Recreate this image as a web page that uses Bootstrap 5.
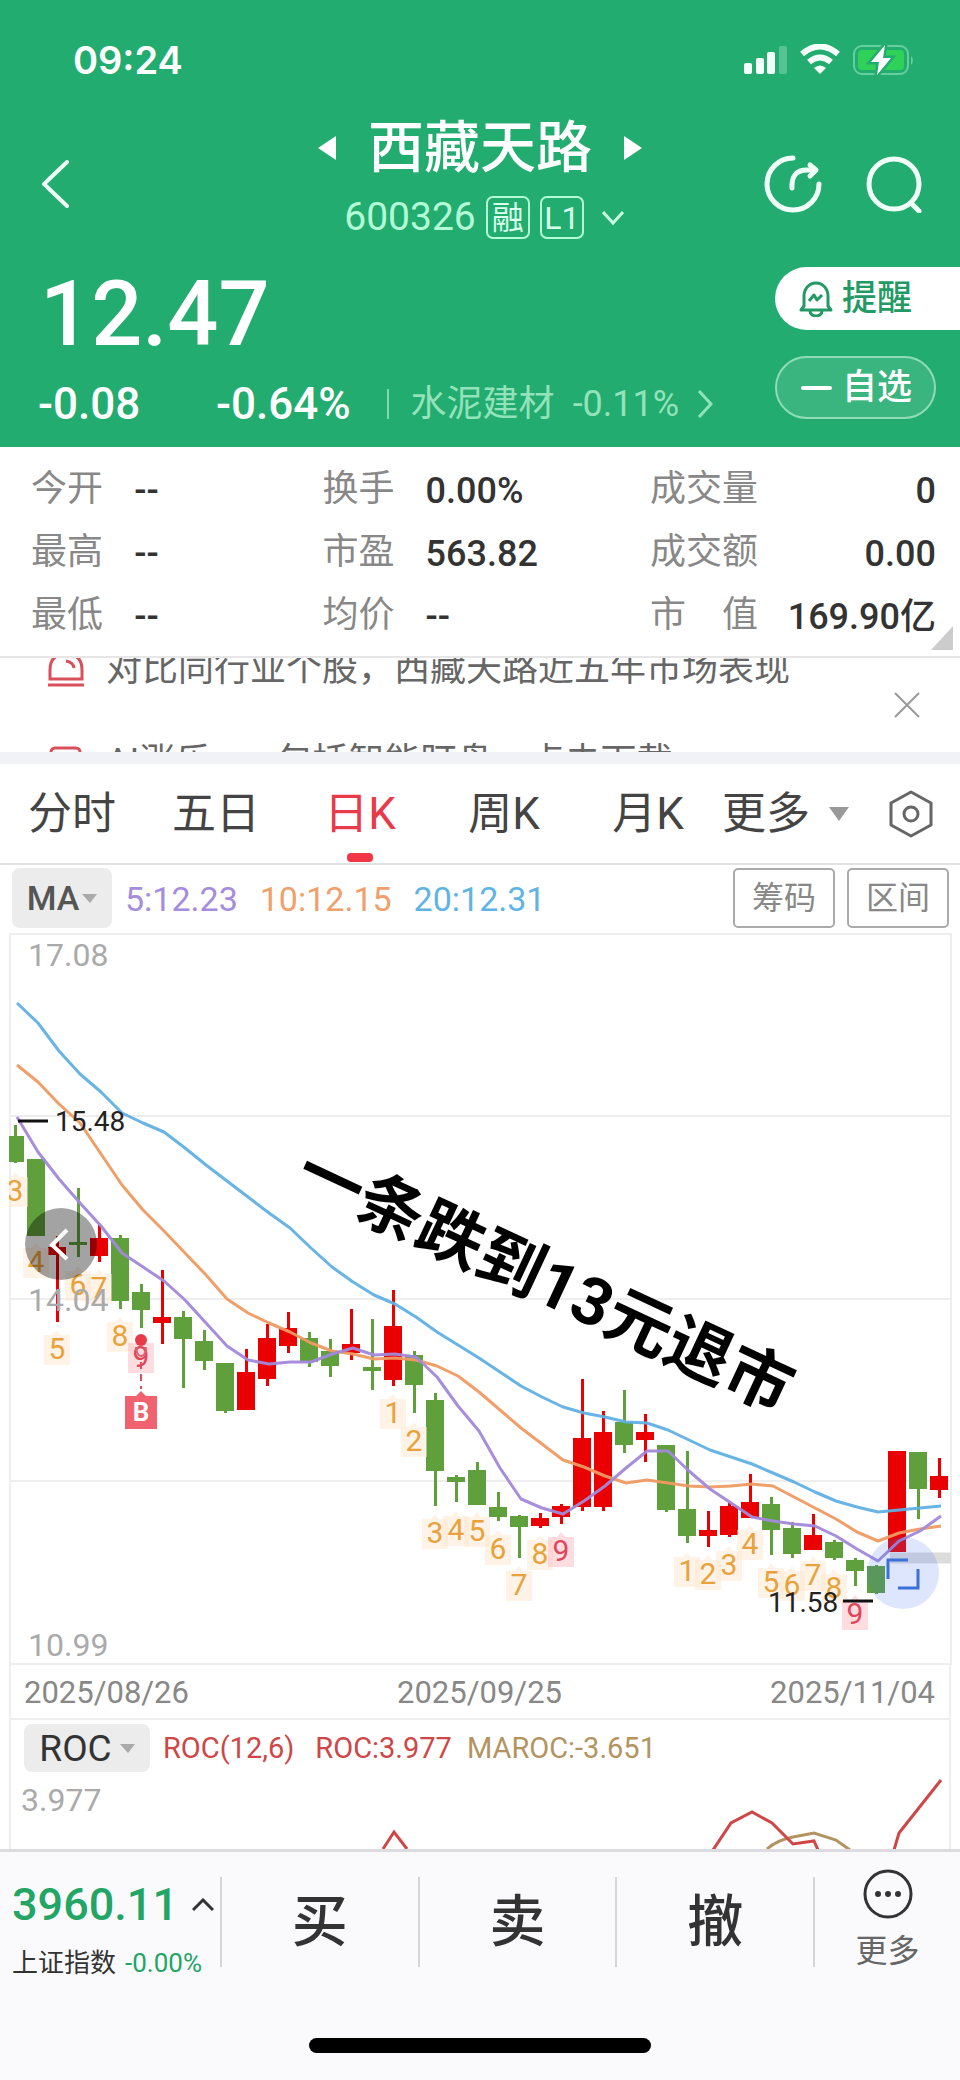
<!DOCTYPE html>
<html lang="zh-CN">
<head>
<meta charset="utf-8">
<meta name="viewport" content="width=device-width, initial-scale=1">
<title>西藏天路 600326</title>
<link href="https://cdn.jsdelivr.net/npm/bootstrap@5.3.0/dist/css/bootstrap.min.css" rel="stylesheet">
<style>
  body { font-family: Roboto, "Noto Sans CJK SC", sans-serif; color: #333; background: #fff; line-height: 1; }
  button { font-family: inherit; border: 0; background: none; padding: 0; color: inherit; line-height: inherit; }
  a { color: inherit; text-decoration: none; }
  svg { display: block; flex: none; }
  .quote-head { background: #23ac6f; color: #fff; padding-bottom: 22px; }
  .status-bar { height: 120px; padding: 0 44px 0 73px; }
  .clock { font: 600 38px/40px Inter, sans-serif; }
  .nav-row { height: 119px; padding: 0 36px; }
  .side-slot { width: 160px; }
  .stock-name { font-size: 56px; line-height: 56px; font-weight: 500; margin: 0; }
  .stock-code { font-size: 39px; color: #b4fbd8; }
  .flag { width: 44px; height: 43px; border: 2px solid #b4fbd8; border-radius: 7px; font-size: 32px; color: #d8ffec; }
  .quote-main { min-height: 159px; margin-bottom: -1px; }
  .price { font-size: 90px; line-height: 80px; font-weight: 500; padding: 8px 0 0 2px; }
  .change { font-size: 44px; line-height: 44px; font-weight: 500; }
  .change-first { width: 178px; }
  .sector { font-size: 36px; color: #93e2ba; }
  .pill { width: 161px; height: 63px; font-size: 35px; font-weight: 500; border-radius: 32px; gap: 9px; }
  .pill-alert { width: 185px; background: #fff; color: #239a66; border-radius: 32px 0 0 32px; padding-left: 24px; }
  .pill-fav { background: #3bb57f; border: 2px solid #8fdcb6; padding-left: 24px; }
  .stats { width: 100%; table-layout: fixed; margin: 0; }
  .stats-wrap { padding: 10px 24px 10px 31px; border-bottom: 2px solid #e6e6e6; position: relative; }
  .stats th { font-size: 36px; font-weight: 400; color: #888; height: 63px; padding: 0; white-space: nowrap; }
  .stats td { font-size: 36px; font-weight: 500; color: #333; padding: 5px 0 0; white-space: nowrap; }
  .corner { position: absolute; right: 7px; bottom: 6px; }
  .ads { height: 94px; overflow: hidden; font-size: 36px; line-height: 48px; color: #666; padding: 0 39px 0 48px; }
  .ads-list { margin-top: -13px; }
  .ads-item { height: 48px; margin-bottom: 45px; gap: 22px; }
  .band { height: 12px; background: #f1f2f7; }
  .tabs { height: 101px; border-bottom: 2px solid #e2e2e2; font-size: 44px; color: #444; }
  .tab { width: 15%; position: relative; }
  .tab.on { color: #e83a49; }
  .tab.on::after { content: ""; position: absolute; left: 50%; margin-left: -13px; bottom: 1px; width: 26px; height: 9px; border-radius: 4px; background: #f23645; }
  .ma-row { height: 68px; padding: 3px 11px 5px 12px; }
  .chip { background: #ececec; border-radius: 8px; color: #555; }
  .chip-ma { width: 100px; height: 60px; gap: 3px; font-size: 34px; font-weight: 500; }
  .chip-roc { width: 126px; height: 48px; gap: 8px; font-size: 37px; color: #333; }
  .ma-val { font-size: 34px; gap: 22px; margin-left: 13px; padding-top: 2px; }
  .ghost { width: 102px; height: 60px; border: 2px solid #aaa; border-radius: 5px; font-size: 32px; color: #888; }
  .chart-box { position: relative; overflow: hidden; }
  .round-prev { position: absolute; left: 25px; top: 275px; width: 72px; height: 72px; border-radius: 50%; background: rgba(0,0,0,.36); }
  .round-full { position: absolute; right: 21px; top: 604px; width: 72px; height: 72px; border-radius: 50%; background: rgba(64,116,240,.18); }
  .dates { margin: 0 9px; height: 55px; padding: 2px 14px 0 13px; border: solid #eee; border-width: 0 2px 2px; font-size: 31px; color: #888; }
  .roc { margin: 0 9px; border: solid #eee; border-width: 0 2px; height: 129px; position: relative; overflow: hidden; }
  .roc-head { padding: 4px 0 0 13px; font-size: 29px; }
  .roc-line { position: absolute; left: 0; bottom: 0; width: 100%; }
  .roc-axis { font-size: 32px; color: #aaa; padding: 12px 0 0 10px; }
  .trade { background: #fafafd; border-top: 3px solid #dcdce0; padding-bottom: 18px; }
  .trade-row { height: 141px; padding-top: 25px; }
  .cell { border-left: 2px solid #d5d5d8; height: 90px; }
  .act { font-size: 56px; font-weight: 500; width: 20.6%; color: #333; }
  .index-box { width: 22.9%; height: 104px; padding: 5px 0 0 12px; }
  .index-num { font-size: 45px; font-weight: 500; color: #22a565; line-height: 46px; }
  .index-name { font-size: 26px; gap: 9px; line-height: 36px; }
  .home-bar { width: 342px; height: 15px; border-radius: 8px; background: #000; margin: 45px auto 0; }
</style>
</head>
<body class="d-flex flex-column min-vh-100">
<header class="quote-head">
  <div class="status-bar d-flex align-items-center justify-content-between">
    <div class="clock">09:24</div>
    <svg width="172" height="32" viewBox="744 45 172 32">
      <g fill="#f4fff9"><rect x="744" y="64" width="8" height="11" rx="2"/><rect x="756" y="59" width="8" height="16" rx="2"/><rect x="767" y="53" width="8" height="22" rx="2"/></g>
      <rect x="779" y="47" width="8" height="28" rx="2" fill="#55c293"/>
      <g fill="none" stroke="#f4fff9" stroke-width="6"><path d="M802 55 Q820 40 838 55"/><path d="M809 63 Q820 54 831 63"/></g>
      <path d="M814 69 Q820 64 826 69 L820 75Z" fill="#f4fff9"/>
      <rect x="854" y="47" width="54" height="28" rx="8" fill="none" stroke="#66cd9f" stroke-width="2"/>
      <rect x="858" y="51" width="46" height="20" rx="4" fill="#30d158"/>
      <path d="M911 57 Q915 61 911 66Z" fill="#66cd9f"/>
      <path d="M885 46 L871 63 H879 L877 76 L891 59 H883Z" fill="#fff" stroke="#23ac6f" stroke-width="5" paint-order="stroke"/>
    </svg>
  </div>
  <div class="nav-row d-flex justify-content-between">
    <div class="side-slot d-flex align-items-center pt-2 ps-1"><button aria-label="返回"><svg width="30" height="50" viewBox="0 0 30 50"><path d="M27 3 L4 25 L27 47" fill="none" stroke="#effff7" stroke-width="4" stroke-linecap="round" stroke-linejoin="round"/></svg></button></div>
    <div class="d-flex flex-column align-items-center justify-content-between">
      <div class="d-flex align-items-center" style="gap:31px">
        <button aria-label="上一只"><svg width="20" height="26" viewBox="0 0 20 26"><path d="M19 1 V25 L1 13Z" fill="#fff"/></svg></button>
        <h1 class="stock-name">西藏天路</h1>
        <button aria-label="下一只"><svg width="20" height="26" viewBox="0 0 20 26"><path d="M1 1 V25 L19 13Z" fill="#fff"/></svg></button>
      </div>
      <div class="d-flex align-items-center ps-2" style="gap:10px">
        <span class="stock-code">600326</span>
        <span class="flag d-flex align-items-center justify-content-center">融</span>
        <span class="flag d-flex align-items-center justify-content-center">L1</span>
        <button class="ms-2" aria-label="展开"><svg width="22" height="16" viewBox="0 0 22 16"><path d="M1 2 L11 13 L21 2" fill="none" stroke="#c8fde2" stroke-width="3"/></svg></button>
      </div>
    </div>
    <div class="side-slot d-flex align-items-center justify-content-end pt-2" style="gap:44px">
      <button aria-label="分享"><svg width="58" height="58" viewBox="763 154 58 58"><g fill="none" stroke="#effff7" stroke-width="5" stroke-linecap="round" stroke-linejoin="round"><path d="M792 157 A26 26 0 1 0 818 183"/><path d="M791 187 Q790 169 806 169 H814"/><path d="M809 164 L815 169 L809 175"/></g></svg></button>
      <button aria-label="搜索"><svg width="58" height="58" viewBox="866 154 58 58"><g fill="none" stroke="#effff7" stroke-width="5" stroke-linecap="round"><circle cx="894" cy="183" r="25"/><path d="M911 202 L919 210"/></g></svg></button>
    </div>
  </div>
  <div class="d-flex justify-content-between" style="padding:28px 0 0 38px">
    <div class="quote-main d-flex flex-column justify-content-between">
      <div class="price">12.47</div>
      <div class="change d-flex align-items-center">
        <span class="change-first">-0.08</span><span>-0.64%</span>
        <span style="width:2px;height:30px;background:#7fd9ac;margin:0 22px 0 36px"></span>
        <a href="#" class="sector d-flex align-items-center fw-normal" style="gap:18px"><span>水泥建材</span><span>-0.11%</span>
        <svg width="16" height="32" viewBox="0 0 16 32"><path d="M2 3 L14 16 L2 29" fill="none" stroke="#93e2ba" stroke-width="3"/></svg></a>
      </div>
    </div>
    <div class="d-flex flex-column" style="gap:26px">
      <button class="pill pill-alert d-flex align-items-center"><svg width="34" height="36" viewBox="0 0 34 36"><g fill="none" stroke="#239a66" stroke-width="3" stroke-linejoin="round"><path d="M2 29 H32 L29 25 V15 A12 13 0 0 0 5 15 V25Z"/><path d="M11 30 A6 5 0 0 0 23 30"/><path d="M10 20 L15 14 L18 19 L23 14"/></g></svg>提醒</button>
      <button class="pill pill-fav d-flex align-items-center"><svg width="32" height="6" viewBox="0 0 32 6"><path d="M2 3 H29" stroke="#fff" stroke-width="4" stroke-linecap="round"/></svg>自选</button>
    </div>
  </div>
</header>

<main>
  <section class="stats-wrap">
    <table class="stats">
      <colgroup><col style="width:11.4%"><col style="width:20.8%"><col style="width:11.4%"><col style="width:24.8%"><col style="width:12%"><col></colgroup>
      <tr><th scope="row">今开</th><td>--</td><th scope="row">换手</th><td>0.00%</td><th scope="row">成交量</th><td class="text-end">0</td></tr>
      <tr><th scope="row">最高</th><td>--</td><th scope="row">市盈</th><td>563.82</td><th scope="row">成交额</th><td class="text-end">0.00</td></tr>
      <tr><th scope="row">最低</th><td>--</td><th scope="row">均价</th><td>--</td><th scope="row">市　值</th><td class="text-end">169.90亿</td></tr>
    </table>
    <svg class="corner" width="22" height="24" viewBox="0 0 22 24"><path d="M22 0 V24 H0Z" fill="#ccc"/></svg>
  </section>

  <section class="ads d-flex justify-content-between">
    <div class="ads-list">
      <div class="ads-item d-flex align-items-center"><svg width="36" height="38" viewBox="0 0 36 38"><g fill="none" stroke="#d9505b" stroke-width="3"><path d="M2 29 V20 Q2 4 18 4 Q34 4 34 20 V29Z"/><path d="M18 11 Q25 12 26 18"/><path d="M0 35 H36"/></g></svg><a href="#">对比同行业个股，西藏天路近五年市场表现</a></div>
      <div class="ads-item d-flex align-items-center"><svg width="36" height="38" viewBox="0 0 36 38"><rect x="3" y="5" width="29" height="30" rx="4" fill="none" stroke="#d9505b" stroke-width="3"/></svg><a href="#">AI涨乐—— 包括智能盯盘，点击下载</a></div>
    </div>
    <button aria-label="关闭"><svg width="28" height="28" viewBox="0 0 28 28"><path d="M2 2 L26 26 M26 2 L2 26" stroke="#999" stroke-width="2"/></svg></button>
  </section>
  <div class="band"></div>

  <nav class="tabs d-flex align-items-stretch">
    <button class="tab">分时</button><button class="tab">五日</button><button class="tab on">日K</button><button class="tab">周K</button><button class="tab">月K</button>
    <button class="d-flex align-items-center" style="gap:18px;margin-left:2px">更多<svg width="22" height="16" viewBox="0 0 22 16"><path d="M1 1 H21 L11 15Z" fill="#999"/></svg></button>
    <button class="ms-auto d-flex align-items-center" style="margin-right:26px" aria-label="设置"><svg width="46" height="50" viewBox="0 0 46 50"><g fill="none" stroke="#666" stroke-width="3" stroke-linejoin="round"><path d="M23 3 L43 14 V36 L23 47 L3 36 V14Z"/><circle cx="23" cy="25" r="7"/></g></svg></button>
  </nav>

  <section>
    <div class="ma-row d-flex align-items-center">
      <button class="chip chip-ma d-flex align-items-center justify-content-center">MA<svg width="15" height="9" viewBox="0 0 15 9"><path d="M0 0 H15 L8 9Z" fill="#aaa"/></svg></button>
      <div class="ma-val d-flex"><span style="color:#a58ddd">5:12.23</span><span style="color:#f0a06a">10:12.15</span><span style="color:#5fb4e5">20:12.31</span></div>
      <button class="ghost ms-auto">筹码</button><button class="ghost" style="margin-left:12px">区间</button>
    </div>
    <div class="chart-box">
      <svg id="kline" width="100%" viewBox="0 934 960 732" role="img" aria-label="日K线图" font-family="Roboto, 'Noto Sans CJK SC', sans-serif">
        <clipPath id="plot"><rect x="9" y="934" width="943" height="732"/></clipPath>
        <g stroke="#eee" stroke-width="2"><path d="M9 935 H952 M9 1117 H952 M9 1300 H952 M9 1482 H952 M9 1665 H952 M10 934 V1666 M951 934 V1666"/></g>
        <path d="M890 1559 H951" stroke="#dcdcdc" stroke-width="11"/>
        <g id="candles" clip-path="url(#plot)"></g>
        <g id="lines" fill="none" stroke-width="3" stroke-linejoin="round" opacity=".95"></g>
        <g fill="#aaa" font-size="32"><text x="28" y="967">17.08</text><text x="28" y="1312">14.04</text><text x="28" y="1657">10.99</text></g>
        <g stroke="#111" stroke-width="3"><path d="M18 1122 H48 M843 1602 H873"/></g>
        <g fill="#222" font-size="28"><text x="55" y="1132">15.48</text><text x="768" y="1613">11.58</text></g>
        <g><path d="M141 1363 V1390" stroke="#d9505b" stroke-width="2" stroke-dasharray="7 5"/><circle cx="141" cy="1341" r="6" fill="#e83a49"/><path d="M136 1348 Q137 1357 141 1357 Q146 1357 146 1348" fill="none" stroke="#e06070" stroke-width="2"/><path d="M125 1397 H136 L141 1392 L146 1397 H157 V1430 H125Z" fill="#f0626f"/><text x="141" y="1422" font-size="26" font-weight="700" fill="#fff" text-anchor="middle">B</text></g>
        <text transform="translate(292 1188) rotate(25)" font-size="66" font-weight="700" fill="#000">一条跌到13元退市</text>
      </svg>
      <button class="round-prev" aria-label="收起"><svg width="72" height="72" viewBox="0 0 72 72"><path d="M42 22 L27 37 L42 51" fill="none" stroke="#fff" stroke-width="4"/></svg></button>
      <button class="round-full" aria-label="全屏"><svg width="72" height="72" viewBox="0 0 72 72"><path d="M21 42 V23 H41 M31 51 H51 V32" fill="none" stroke="#3a70d8" stroke-width="3"/></svg></button>
    </div>
    <div class="dates d-flex align-items-center justify-content-between"><span>2025/08/26</span><span>2025/09/25</span><span>2025/11/04</span></div>
    <div class="roc">
      <svg class="roc-line" viewBox="11 1721 938 128" role="img" aria-label="ROC"><g fill="none" stroke-width="3"><path d="M767 1849 Q777 1840 793 1837 L814 1833 L836 1840 L850 1850" stroke="#b39460"/><g stroke="#cf4646"><path d="M383 1849 L394 1832 L407 1849"/><path d="M713 1850 L731 1823 L752 1812 L772 1823 L793 1844 L814 1841 L818 1850"/><path d="M894 1850 L899 1833 L941 1780"/></g></g></svg>
      <div class="roc-head d-flex align-items-center">
        <button class="chip chip-roc d-flex align-items-center justify-content-center">ROC<svg width="15" height="9" viewBox="0 0 15 9"><path d="M0 0 H15 L8 9Z" fill="#aaa"/></svg></button>
        <span style="color:#cf4646;margin-left:13px">ROC(12,6)</span><span style="color:#cf4646;margin-left:21px">ROC:3.977</span><span style="color:#b39460;margin-left:15px">MAROC:-3.651</span>
      </div>
      <div class="roc-axis">3.977</div>
    </div>
  </section>
</main>

<footer class="trade flex-fill">
  <div class="trade-row d-flex">
    <a href="#" class="index-box d-flex flex-column justify-content-between">
      <span class="index-num d-flex align-items-center" style="gap:14px">3960.11<svg width="22" height="14" viewBox="0 0 22 14"><path d="M1 12 L11 2 L21 12" fill="none" stroke="#333" stroke-width="3"/></svg></span>
      <span class="index-name d-flex"><span>上证指数</span><span style="color:#22a565">-0.00%</span></span>
    </a>
    <button class="cell act">买</button><button class="cell act">卖</button><button class="cell act">撤</button>
    <button class="cell flex-fill d-flex flex-column align-items-center justify-content-between" style="font-size:32px;color:#666">
      <svg width="52" height="52" viewBox="0 0 52 52" style="margin-top:-9px"><circle cx="26" cy="26" r="23" fill="none" stroke="#333" stroke-width="3"/><g fill="#333"><circle cx="16" cy="26" r="3"/><circle cx="26" cy="26" r="3"/><circle cx="36" cy="26" r="3"/></g></svg>更多</button>
  </div>
  <div class="home-bar"></div>
</footer>

<script>
  // Daily candles: [colour, high, body top, body bottom, low]
  const candles = [
    ['g',1126,1137,1163,1164],['g',1160,1160,1237,1237],['r',1237,1248,1256,1323],['g',1189,1243,1246,1258],['r',1226,1239,1257,1263],
    ['g',1236,1239,1302,1310],['g',1285,1293,1311,1329],['r',1271,1318,1324,1345],['g',1312,1318,1340,1389],['g',1331,1342,1362,1371],
    ['g',1364,1364,1412,1414],['r',1350,1373,1411,1411],['r',1325,1339,1380,1387],['r',1313,1329,1347,1354],['g',1333,1339,1363,1368],
    ['g',1340,1352,1367,1378],['r',1310,1345,1354,1361],['g',1320,1368,1372,1391],['r',1291,1327,1381,1387],['g',1352,1356,1386,1414],
    ['g',1394,1401,1472,1507],['g',1476,1478,1483,1503],['g',1463,1471,1506,1506],['g',1493,1508,1518,1522],['g',1516,1517,1528,1559],
    ['r',1514,1519,1527,1529],['r',1505,1507,1518,1525],['r',1380,1439,1508,1512],['r',1412,1433,1508,1512],['g',1391,1423,1446,1454],
    ['r',1415,1433,1441,1463],['g',1446,1446,1511,1513],['g',1452,1510,1537,1544],['r',1512,1531,1537,1548],['r',1504,1507,1536,1538],
    ['r',1475,1503,1519,1519],['g',1498,1505,1531,1556],['g',1523,1529,1555,1559],['r',1515,1536,1551,1551],['g',1541,1543,1559,1561],
    ['g',1559,1561,1572,1587],['g',1566,1567,1594,1595],['r',1452,1452,1553,1553],['g',1453,1453,1490,1520],['r',1459,1477,1491,1499]];
  // Sequence counts: [day, digit, middle of the tag]
  const counts = [[0,3,1191],[1,4,1262],[2,5,1349],[3,6,1285],[4,7,1288],[5,8,1336],[6,9,1357],[18,1,1413],[19,2,1441],[20,3,1533],[21,4,1530],
    [22,5,1531],[23,6,1549],[24,7,1585],[25,8,1554],[26,9,1551],[32,1,1571],[33,2,1574],[34,3,1565],[35,4,1544],[36,5,1582],[37,6,1585],[38,7,1575],[39,8,1588],[40,9,1614]];
  const averages = {
    '#5fb0e4': [1004,1024,1052,1075,1093,1114,1124,1133,1149,1166,1182,1198,1214,1229,1249,1268,1283,1296,1305,1318,1333,1346,1359,1373,1387,1398,1408,1414,1418,1423,1424,1431,1441,1451,1458,1465,1474,1483,1493,1502,1508,1513,1511,1509,1507],
    '#f09a62': [1066,1083,1105,1124,1155,1186,1211,1232,1254,1276,1300,1314,1324,1333,1344,1352,1355,1360,1359,1361,1367,1377,1393,1411,1429,1445,1461,1468,1477,1484,1481,1484,1487,1488,1487,1485,1487,1498,1509,1520,1533,1542,1534,1530,1527],
    '#a389dc': [1118,1153,1180,1204,1227,1254,1268,1282,1301,1324,1347,1361,1365,1363,1363,1355,1349,1356,1355,1358,1378,1407,1432,1469,1500,1509,1515,1502,1487,1469,1452,1452,1472,1490,1504,1518,1522,1525,1527,1537,1550,1562,1542,1532,1517]};
  const center = i => 15 + 21 * i;
  let bars = '';
  candles.forEach(([c, hi, top, bot, lo], i) => {
    const x = center(i);
    bars += `<g fill="${c === 'r' ? '#ea0000' : '#5f9f3c'}"><rect x="${x - 1}" y="${hi}" width="3" height="${lo - hi}"/><rect x="${x - 9}" y="${top}" width="18" height="${bot - top}"/></g>`;
  });
  counts.forEach(([i, n, y]) => {
    const x = center(i), red = n === 9;
    bars += `<path d="M${x - 13} ${y - 13} H${x - 4} L${x} ${y - 18} L${x + 4} ${y - 13} H${x + 13} V${y + 17} H${x - 13}Z" fill="${red ? '#ffb9c2' : '#ffe8cf'}" fill-opacity=".5"/>` +
      `<text x="${x}" y="${y + 11}" font-size="30" text-anchor="middle" fill="${red ? '#e0455a' : '#e9a23b'}">${n}</text>`;
  });
  document.getElementById('candles').innerHTML = bars;
  document.getElementById('lines').innerHTML = Object.entries(averages).map(([c, ys]) =>
    `<polyline stroke="${c}" points="${ys.map((y, i) => (17 + 21 * i) + ',' + y).join(' ')}"/>`).join('');
</script>
<script src="https://cdn.jsdelivr.net/npm/bootstrap@5.3.0/dist/js/bootstrap.bundle.min.js"></script>
</body>
</html>
